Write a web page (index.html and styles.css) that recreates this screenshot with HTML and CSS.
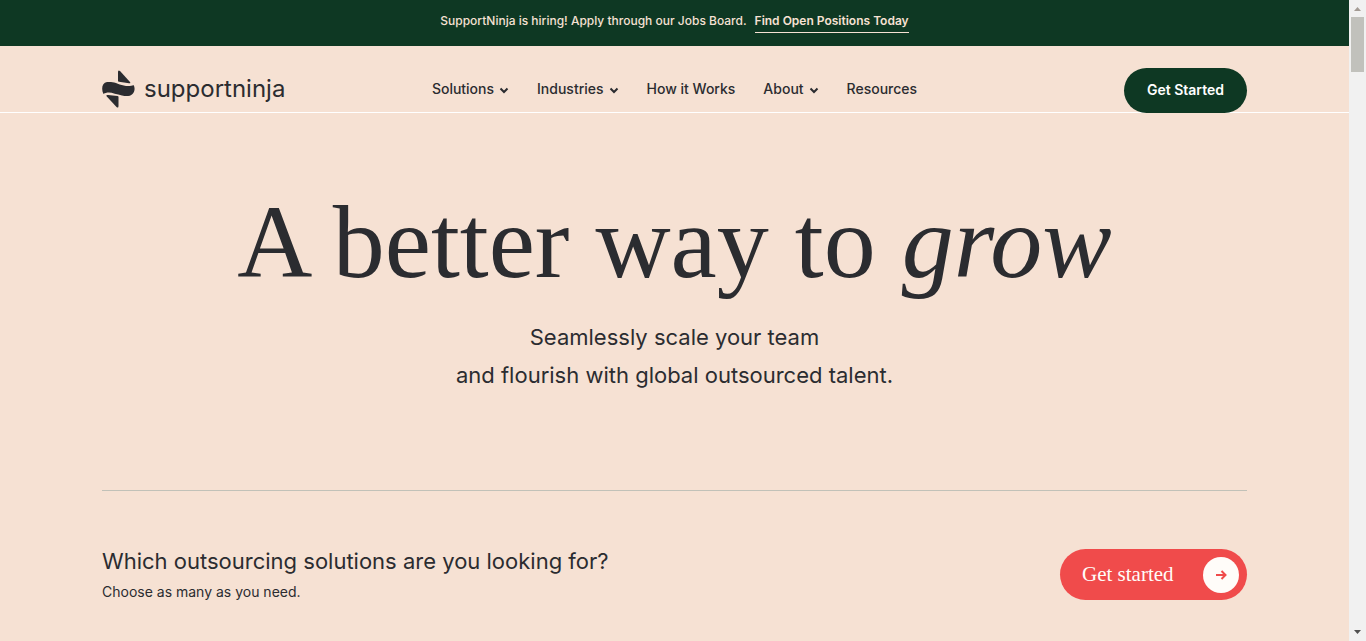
FILE: index.html
```html
<!DOCTYPE html>
<html lang="en">
<head>
  <meta charset="UTF-8" />
  <meta name="viewport" content="width=device-width, initial-scale=1.0" />
  <title>SupportNinja</title>
  <link rel="stylesheet" href="styles.css">
</head>
<body>
  <div class="page">
    <div class="banner">
      <span>SupportNinja is hiring! Apply through our Jobs Board.</span>
      <a href="#">Find Open Positions Today</a>
    </div>

    <header class="header">
      <a class="logo" href="#">
        <svg width="33" height="38" viewBox="0 0 33 38" fill="#2b2c30" aria-hidden="true">
          <path d="M16 11V2Q16 -0.500 18 1L28 12Q29 13.500 27 13.300L17 11.700Q16 11.500 16 11Z"/>
          <path d="M5 12H9C13 12 18 15.200 24 16C27 16.300 30 16 31.500 15C33.500 18 32.500 22 30.500 24C28 26.500 24 26.500 20 25.500C15 24.500 10 22.500 7 22.500C4.500 22.500 3 23 1.500 24C-1 19 0 13 5 12Z"/>
          <path d="M16.500 27V36Q16.500 38.500 14.500 37L4.800 26.500Q3.500 24.800 6 25L15.500 26Q16.500 26.200 16.500 27Z"/>
        </svg>
        <span>supportninja</span>
      </a>
      <nav class="nav">
        <a href="#">Solutions <svg class="chevron" viewBox="0 0 10 7"><path d="M1.500 1.500L5 5L8.500 1.500"/></svg></a>
        <a href="#">Industries <svg class="chevron" viewBox="0 0 10 7"><path d="M1.500 1.500L5 5L8.500 1.500"/></svg></a>
        <a href="#">How it Works</a>
        <a href="#">About <svg class="chevron" viewBox="0 0 10 7"><path d="M1.500 1.500L5 5L8.500 1.500"/></svg></a>
        <a href="#">Resources</a>
      </nav>
      <button class="btn-green">Get Started</button>
    </header>

    <main>
      <section class="hero">
        <h1>A better way to <em>grow</em></h1>
        <p>Seamlessly scale your team<br>and flourish with global outsourced talent.</p>
      </section>

      <section class="solutions">
        <div>
          <h2>Which outsourcing solutions are you looking for?</h2>
          <p>Choose as many as you need.</p>
        </div>
        <button class="btn-red">
          Get started
          <span class="circle">
            <svg width="12" height="12" viewBox="0 0 12 12"><path d="M1 6H10M6.500 2L10.500 6L6.500 10"/></svg>
          </span>
        </button>
      </section>
    </main>
  </div>

  <div class="scrollbar" aria-hidden="true">
    <svg width="17" height="17" viewBox="0 0 17 17" fill="#a39b94"><path d="M5 11L8.500 7L12 11Z"/></svg>
    <div class="thumb"></div>
    <svg class="down" width="17" height="17" viewBox="0 0 17 17" fill="#505050"><path d="M5 6L8.500 10L12 6Z"/></svg>
  </div>
</body>
</html>
```
FILE: styles.css
```css
* {
  box-sizing: border-box;
}
body {
  margin: 0;
  display: flex;
  height: 100vh;
  overflow: hidden;
  font-family: Inter, "Liberation Sans", sans-serif;
  background: #f6e1d3;
  color: #2b2c30;
}
h1, h2, p {
  margin: 0;
  font-weight: 400;
}
a {
  color: inherit;
  text-decoration: none;
}
button {
  border: none;
  cursor: pointer;
}
.page {
  flex: 1;
}
.banner {
  display: flex;
  justify-content: center;
  align-items: flex-start;
  gap: 8px;
  height: 46px;
  padding-top: 9px;
  background: #0e3823;
  color: #f6e1d3;
  font-size: 12px;
  font-weight: 500;
  line-height: 23px;
}
.banner a {
  border-bottom: 1px solid #f6e1d3;
  font-weight: 600;
}
.header {
  display: grid;
  grid-template-columns: 1fr auto 1fr;
  align-items: center;
  height: 67px;
  padding: 22px 102px 0;
  border-bottom: 1px solid #fff;
}
.logo {
  display: flex;
  align-items: center;
  gap: 9px;
  padding-bottom: 3px;
  font-size: 24px;
  line-height: 30px;
}
.nav {
  display: flex;
  gap: 28px;
  padding-bottom: 3px;
  font-size: 14px;
  font-weight: 500;
  line-height: 20px;
}
.nav a {
  display: flex;
  align-items: center;
  gap: 5px;
}
.chevron {
  width: 10px;
  height: 7px;
  margin-top: 2px;
  fill: none;
  stroke: #2b2c30;
  stroke-width: 2;
}
.btn-green {
  justify-self: end;
  align-self: start;
  height: 45px;
  padding: 0 23px 3px;
  border-radius: 23px;
  background: #0e3823;
  color: #fff;
  font-family: inherit;
  font-size: 14px;
  font-weight: 600;
}
.hero {
  padding: 60px 20px 0;
  text-align: center;
}
.hero h1 {
  margin-bottom: 7px;
  font-family: "Liberation Serif", serif;
  font-size: 104px;
  line-height: 138px;
}
.hero p {
  font-size: 22px;
  line-height: 38px;
}
.solutions {
  display: flex;
  justify-content: space-between;
  align-items: flex-start;
  margin: 96px 102px 0;
  padding-top: 53px;
  border-top: 1px solid #c1c1b8;
}
.solutions h2 {
  font-size: 22px;
  line-height: 34px;
}
.solutions p {
  font-size: 14px;
  line-height: 28px;
}
.btn-red {
  display: flex;
  justify-content: space-between;
  align-items: center;
  width: 187px;
  height: 51px;
  margin-top: 5px;
  padding: 0 8px 0 22px;
  border-radius: 26px;
  background: #f04b4b;
  color: #fffcf9;
  font-family: "Liberation Serif", serif;
  font-size: 21px;
}
.circle {
  display: flex;
  align-items: center;
  justify-content: center;
  width: 36px;
  height: 36px;
  border-radius: 50%;
  background: #fffcf9;
}
.circle svg {
  fill: none;
  stroke: #f04b4b;
  stroke-width: 2;
}
.scrollbar {
  display: flex;
  flex-direction: column;
  width: 17px;
  background: #f1f1f1;
}
.thumb {
  width: 13px;
  height: 55px;
  margin: 0 auto;
  background: #c1c1bc;
}
.down {
  margin-top: auto;
}
```
